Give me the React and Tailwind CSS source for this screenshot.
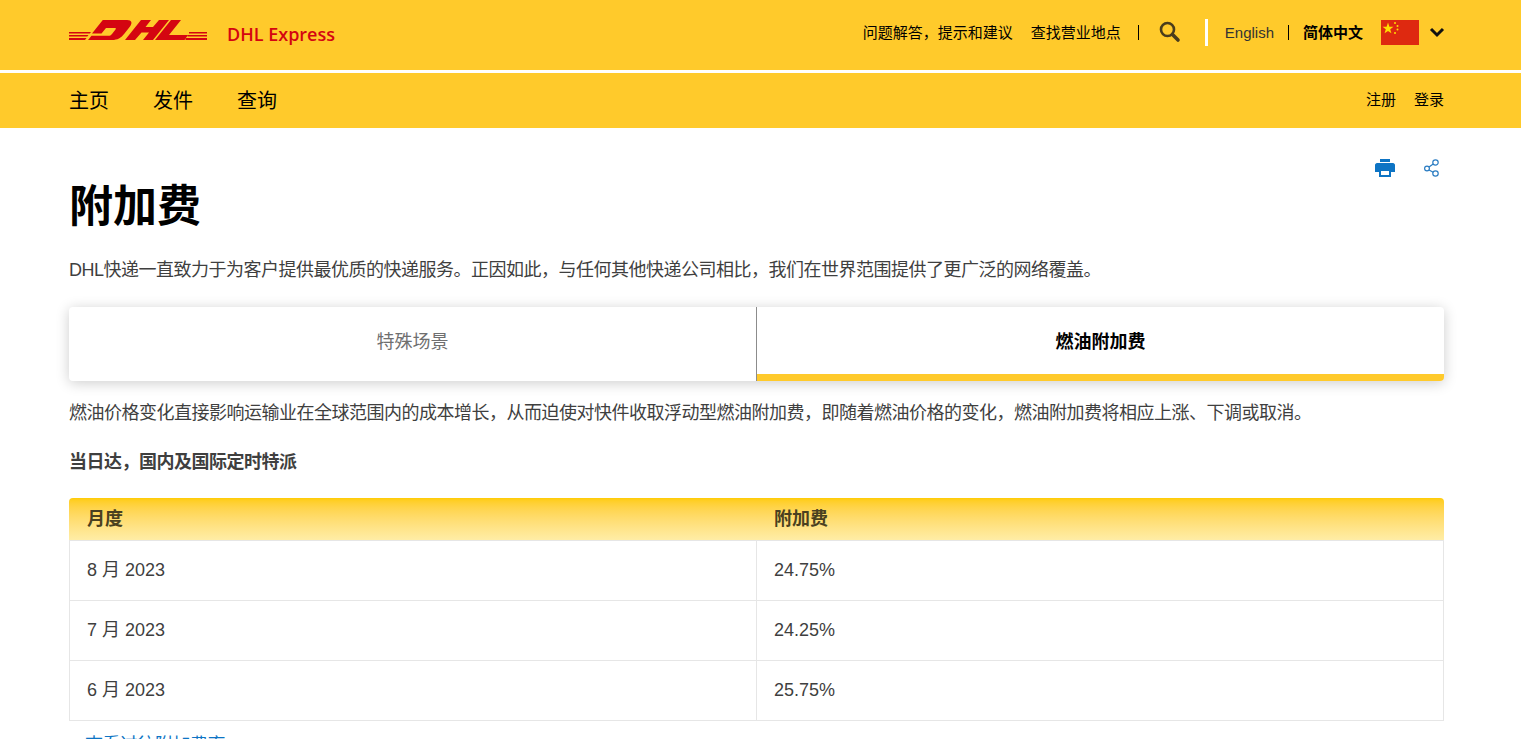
const FONT = "font-['Liberation_Sans','Noto_Sans_CJK_SC',sans-serif]";

function Logo() {
  return (
    <svg width="138" height="20" viewBox="0 0 138 20" className="mb-[4px] block">
      <g fill="#d40511">
        <path d="M0 12h22l-1.200 1.500H0zM0 15h19.500l-1.200 1.400H0zM0 18h17.500L16 20H0z" />
        <path d="M120 12h18v1.500h-18zM118.500 15H138v1.400h-19.500zM116.500 18H138v2h-21.500z" />
        <path d="M19 20 22.500 15.800H39C41 15.800 42 15.300 43 14L46.500 9.500C47.200 8.500 47 8 45.500 8H37L32.500 13.500H23L33.800 0H58C63 0 63.500 3 61 6.500L55.500 13.500C52 18 48.500 20 43 20Z" />
        <path d="M56 20 72 0H82L76.500 7H84L90 0H100L84 20H74L80 12.500H72.500L66 20Z" />
        <path d="M86 20 102 0H112L100 15H119L115.500 20Z" />
      </g>
    </svg>
  );
}

function Flag() {
  return (
    <svg width="38" height="25" viewBox="0 0 38 25" className="block">
      <rect width="38" height="25" fill="#de2910" />
      <polygon points="7,2.500 8.400,6.700 12.500,6.700 9.200,9.300 10.400,13.200 7,10.900 3.600,13.200 4.800,9.300 1.500,6.700 5.600,6.700" fill="#ffde00" />
      <circle cx="14" cy="3" r="1" fill="#ffde00" />
      <circle cx="16.500" cy="6" r="1" fill="#ffde00" />
      <circle cx="16.500" cy="9.500" r="1" fill="#ffde00" />
      <circle cx="14" cy="13" r="1" fill="#ffde00" />
    </svg>
  );
}

function Search() {
  return (
    <svg width="22" height="22" viewBox="0 0 22 22" className="block" fill="none" stroke="#4a3d1c">
      <circle cx="8.500" cy="8.500" r="6.500" strokeWidth="2.600" />
      <path d="M13.500 13.500 19 19" strokeWidth="3.600" strokeLinecap="round" />
    </svg>
  );
}

function Printer() {
  return (
    <svg width="20" height="18" viewBox="0 0 20 18" className="block">
      <path fill="#0d74c4" d="M5 0h10v3H5zM2 4h16c1 0 2 1 2 2v7h-4v-3H4v3H0V6c0-1 1-2 2-2z" />
      <path fill="#0d74c4" d="M4 10h12v8H4zM6 12v4h8v-4z" fillRule="evenodd" />
    </svg>
  );
}

function Share() {
  return (
    <svg width="16" height="18" viewBox="0 0 16 18" className="block" fill="none" stroke="#2a7cc2" strokeWidth="1.200">
      <circle cx="11.500" cy="3.500" r="2.700" />
      <circle cx="3" cy="9.500" r="2.400" />
      <circle cx="11.500" cy="14.500" r="2.700" />
      <path d="M5 8 9.200 5M5 11l4.200 2.200" />
    </svg>
  );
}

function Row({ m, v }) {
  return (
    <div className="flex h-[60px] items-center border-b border-[#e6e6e6] text-[18px] text-[#3f3f3f]">
      <div className="flex h-full w-[687px] items-center border-r border-[#e6e6e6] pl-[17px]">{m}</div>
      <div className="pl-[17px]">{v}</div>
    </div>
  );
}

export default function App() {
  return (
    <div className={`${FONT} h-[739px] overflow-hidden bg-white`}>
      <header className="h-[128px] bg-[#ffca2b]">
        <div className="flex h-[70px] items-center justify-between pb-[6px] pl-[69px] pr-[76px]">
          <div className="flex items-center gap-5">
            <Logo />
            <span className="mt-[4px] font-['Open_Sans',sans-serif] text-[18px] font-semibold text-[#d40511]">DHL Express</span>
          </div>
          <div className="flex items-center text-[15px] text-black">
            <span className="mt-[2px]">问题解答，提示和建议</span>
            <span className="ml-[18px] mt-[2px]">查找营业地点</span>
            <span className="ml-[17px] h-[15px] w-px bg-black" />
            <span className="ml-[20px]"><Search /></span>
            <span className="ml-[24px] h-[27px] w-[3px] bg-white" />
            <span className="ml-[17px] mt-[2px] text-[#333]">English</span>
            <span className="ml-[14px] h-[15px] w-px bg-black" />
            <span className="ml-[14px] mt-[2px] font-bold">简体中文</span>
            <span className="ml-[18px]"><Flag /></span>
            <svg className="ml-[10px]" width="16" height="11" viewBox="0 0 16 11" fill="none" stroke="#111" strokeWidth="3"><path d="M2 2l6 6 6-6" /></svg>
          </div>
        </div>
        <div className="h-[3px] bg-white" />
        <nav className="flex h-[55px] items-center justify-between pl-[69px] pr-[77px] text-black">
          <div className="flex gap-11 text-[20px]">
            <span>主页</span>
            <span>发件</span>
            <span>查询</span>
          </div>
          <div className="flex gap-[18px] text-[15px]">
            <span>注册</span>
            <span>登录</span>
          </div>
        </nav>
      </header>

      <main className="ml-[69px] w-[1375px]">
        <div className="flex justify-end gap-[29px] pr-[4px] pt-[31px]">
          <Printer />
          <Share />
        </div>
        <h1 className="mt-[2px] text-[44px] font-bold leading-[56px] text-black">附加费</h1>
        <p className="mt-[22px] text-[18px] leading-[26px] tracking-[-0.5px] text-[#3f3f3f]">DHL快递一直致力于为客户提供最优质的快递服务。正因如此，与任何其他快递公司相比，我们在世界范围提供了更广泛的网络覆盖。</p>

        <div className="mt-[24px] flex h-[74px] rounded-[4px] bg-white shadow-[0_2px_14px_rgba(0,0,0,0.2)]">
          <div className="flex w-[688px] items-center justify-center border-r border-[#8c8c8c] pb-[3px] text-[18px] text-[#6f6f6f]">特殊场景</div>
          <div className="flex flex-1 items-center justify-center overflow-hidden rounded-r-[4px] border-b-[7px] border-[#ffca2b] pt-[4px] text-[18px] font-bold text-black">燃油附加费</div>
        </div>

        <p className="mt-[19px] whitespace-nowrap text-[18px] leading-[26px] tracking-[-0.5px] text-[#3f3f3f]">燃油价格变化直接影响运输业在全球范围内的成本增长，从而迫使对快件收取浮动型燃油附加费，即随着燃油价格的变化，燃油附加费将相应上涨、下调或取消。</p>
        <p className="mt-[23px] text-[18px] font-bold leading-[26px] tracking-[-0.5px] text-[#3f3f3f]">当日达，国内及国际定时特派</p>

        <div className="mt-[23px]">
          <div className="flex h-[42px] items-center rounded-t-[4px] bg-gradient-to-b from-[#ffcc00] to-[#ffeda6] pt-[1px] text-[18px] font-bold text-[#4a4120]">
            <div className="w-[687px] pl-[18px]">月度</div>
            <div className="pl-[18px]">附加费</div>
          </div>
          <div className="border-x border-t border-[#e6e6e6]">
            <Row m="8 月 2023" v="24.75%" />
            <Row m="7 月 2023" v="24.25%" />
            <Row m="6 月 2023" v="25.75%" />
          </div>
          <a className="mt-[11px] block pl-[16px] text-[18px] leading-[26px] tracking-[-0.5px] text-[#0d74c4]">查看过往附加费率</a>
        </div>
      </main>
    </div>
  );
}
